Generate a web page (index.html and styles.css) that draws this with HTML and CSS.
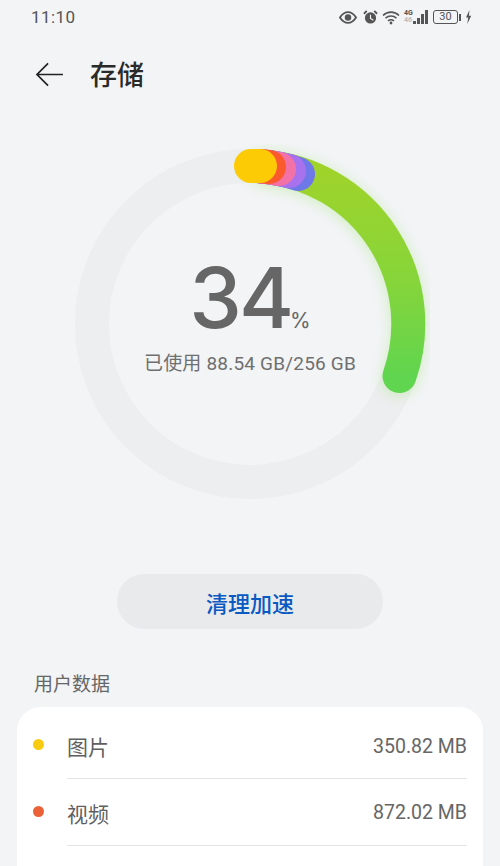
FILE: index.html
```html
<!DOCTYPE html>
<html lang="zh-CN">
<head>
<meta charset="utf-8">
<title>存储</title>
<link rel="stylesheet" href="styles.css">
</head>
<body>
<div class="screen">
  <div class="status">
    <span class="time">11:10</span>
    <div class="status-icons">
      <svg class="i-eye" viewBox="0 0 20 14"><path d="M1 7C4 2.500 7 1 10 1s6 1.500 9 6c-3 4.500-6 6-9 6s-6-1.500-9-6z" fill="none" stroke="#555" stroke-width="2"/><circle cx="10" cy="7" r="3.600" fill="#555"/></svg>
      <svg class="i-alarm" viewBox="0 0 16 16"><circle cx="8" cy="9" r="6" fill="#555"/><path d="M1 4.500 4 1.500M15 4.500 12 1.500" stroke="#555" stroke-width="2" fill="none"/><path d="M8 5.500V9.500L11 11.500" stroke="#f2f4f6" stroke-width="1.200" fill="none"/></svg>
      <svg class="i-wifi" viewBox="0 0 18 15"><path d="M1 5.500C5.500 1 12.500 1 17 5.500M3.500 8.200C6.500 5.200 11.500 5.200 14.500 8.200M6 11C7.700 9.400 10.300 9.400 12 11" fill="none" stroke="#555" stroke-width="1.600"/><circle cx="9" cy="13" r="1.400" fill="#555"/></svg>
      <div class="net"><span class="net-top">4G</span><span class="net-bottom">46</span></div>
      <div class="bars"><i class="b1"></i><i class="b2"></i><i class="b3"></i><i class="b4"></i></div>
      <div class="battery"><span class="battery-box">30</span><i class="battery-tip"></i></div>
      <svg class="i-bolt" viewBox="0 0 7 14"><path d="M4.500 0 1 7.500h2.200L2.300 14 6.200 5.800H3.900z" fill="#555"/></svg>
    </div>
  </div>

  <header class="title-bar">
    <svg class="back" viewBox="0 0 30 26"><path d="M29 13H2M13.500 1.500 2 13l11.500 11.500" fill="none" stroke="#222" stroke-width="1.800"/></svg>
    <h1>存储</h1>
  </header>

  <section class="gauge">
    <svg class="ring" viewBox="0 0 360 360">
      <defs>
        <linearGradient id="g" x1="0" y1="0" x2="0" y2="1">
          <stop offset="0" stop-color="#a0d32a"/>
          <stop offset="0.550" stop-color="#86d53a"/>
          <stop offset="1" stop-color="#60d54f"/>
        </linearGradient>
      </defs>
      <circle class="track" cx="180" cy="180" r="158"/>
      <path class="arc glow" stroke="url(#g)" d="M195 22.700A158 158 0 0 1 329.500 232"/>
      <path class="arc" stroke="#6f78e8" d="M190 22.300A158 158 0 0 1 228 30"/>
      <path class="arc" stroke="#a872ee" d="M190 22.300A158 158 0 0 1 219 27"/>
      <path class="arc" stroke="#f272a8" d="M190 22.300A158 158 0 0 1 209 25"/>
      <path class="arc" stroke="#fb5b2c" d="M190 22.300A158 158 0 0 1 199 23"/>
      <path class="arc" stroke="#fdca06" d="M181 22H190"/>
    </svg>
    <div class="readout">
      <div class="pct"><span class="num">34</span><span class="sign">%</span></div>
      <div class="used">已使用 88.54 GB/256 GB</div>
    </div>
  </section>

  <div class="action"><button class="clean">清理加速</button></div>

  <div class="section-label">用户数据</div>
  <div class="card">
    <div class="row"><i class="dot yellow"></i><span class="name">图片</span><span class="size">350.82 MB</span></div>
    <div class="row"><i class="dot red"></i><span class="name">视频</span><span class="size">872.02 MB</span></div>
  </div>
</div>
</body>
</html>
```
FILE: styles.css
```css
* { box-sizing: border-box; }
html, body { margin: 0; padding: 0; }
body {
  width: 500px;
  height: 866px;
  overflow: hidden;
  background: #f2f4f6;
  font-family: Inter, "Noto Sans CJK SC", sans-serif;
}
.screen { display: flex; flex-direction: column; height: 866px; overflow: hidden; }

.status {
  flex: none;
  height: 36px;
  padding: 0 30px 2px 31px;
  display: flex;
  align-items: center;
  justify-content: space-between;
  color: #555;
}
.time { font-size: 17px; font-family: Roboto, sans-serif; letter-spacing: .4px; }
.status-icons { display: flex; align-items: center; height: 20px; margin-right: -2px; }
.i-eye { width: 18px; height: 13px; margin-right: 6px; }
.i-alarm { width: 15px; height: 16px; margin-right: 4px; }
.i-wifi { width: 18px; height: 15px; }
.net { display: flex; flex-direction: column; width: 9px; margin-left: 4px; line-height: 7px; font-size: 7px; font-weight: 700; font-family: Roboto, sans-serif; }
.net-bottom { color: #bbb; }
.bars { display: flex; align-items: flex-end; gap: 1px; height: 14px; margin-right: 5px; }
.bars i { display: block; width: 3px; background: #555; }
.b1 { height: 3px; } .b2 { height: 6px; } .b3 { height: 10px; } .b4 { height: 14px; }
.battery { display: flex; align-items: center; margin-right: 4px; }
.battery-box {
  width: 25px; height: 14px;
  border: 1px solid #555;
  border-radius: 3px;
  font: 11px/12px Roboto, sans-serif;
  text-align: center;
  color: #555;
}
.battery-tip { width: 2px; height: 7px; margin-left: 1px; background: #555; }
.i-bolt { width: 7px; height: 14px; }

.title-bar { flex: none; height: 76px; padding-left: 35px; display: flex; align-items: center; }
.back { width: 29px; height: 25px; }
h1 { margin: 0 0 0 26px; font-size: 27px; line-height: 34px; font-weight: 500; color: #2a2a2a; font-family: "Noto Sans CJK SC", sans-serif; }

.gauge { flex: none; position: relative; height: 360px; margin-top: 32px; display: flex; justify-content: center; }
.ring { width: 360px; height: 360px; display: block; }
.track { fill: none; stroke: #eceeef; stroke-width: 34; }
.arc { fill: none; stroke-width: 34; stroke-linecap: round; }
.glow { filter: drop-shadow(0 2px 7px rgba(140, 225, 80, .35)); }
.readout { position: absolute; left: 0; right: 0; top: 114px; text-align: center; }
.pct { display: flex; justify-content: center; align-items: baseline; height: 80px; color: #666; }
.num { font-size: 84px; line-height: 80px; font-weight: 500; font-family: Inter, sans-serif; letter-spacing: -3px; }
.sign { font-size: 21px; margin-left: -1px; }
.used { margin-top: 13px; font-size: 19px; line-height: 26px; color: #6f6f6f; font-family: Roboto, "Noto Sans CJK SC", sans-serif; letter-spacing: .2px; }

.action { flex: none; margin-top: 70px; display: flex; justify-content: center; }
.clean {
  width: 266px; height: 55px;
  border: 0;
  border-radius: 28px;
  background: #e8eaec;
  color: #0b59c2;
  font-size: 22px;
  font-weight: 500;
  font-family: "Noto Sans CJK SC", sans-serif;
}

.section-label { flex: none; margin: 41px 0 0 34px; height: 37px; font-size: 19px; line-height: 26px; color: #666; font-family: "Noto Sans CJK SC", sans-serif; }
.card { flex: 1 0 auto; margin: 0 17px; background: #fff; border-radius: 24px 24px 0 0; padding: 0 16px; }
.row {
  display: flex;
  align-items: center;
  height: 67px;
  position: relative;
}
.row:first-child { height: 72px; padding-top: 6px; }
.row::after {
  content: "";
  position: absolute;
  left: 34px; right: 0; bottom: 0;
  height: 1px;
  background: #e3e4e6;
}
.dot { width: 11px; height: 11px; border-radius: 50%; margin: -3px 23px 0 0; }
.yellow { background: #f8cb12; }
.red { background: #ec6238; }
.name { font-size: 21px; color: #5f5f5f; font-family: "Noto Sans CJK SC", sans-serif; }
.size { margin-left: auto; font-size: 19.5px; color: #666; font-family: Roboto, sans-serif; }
```
